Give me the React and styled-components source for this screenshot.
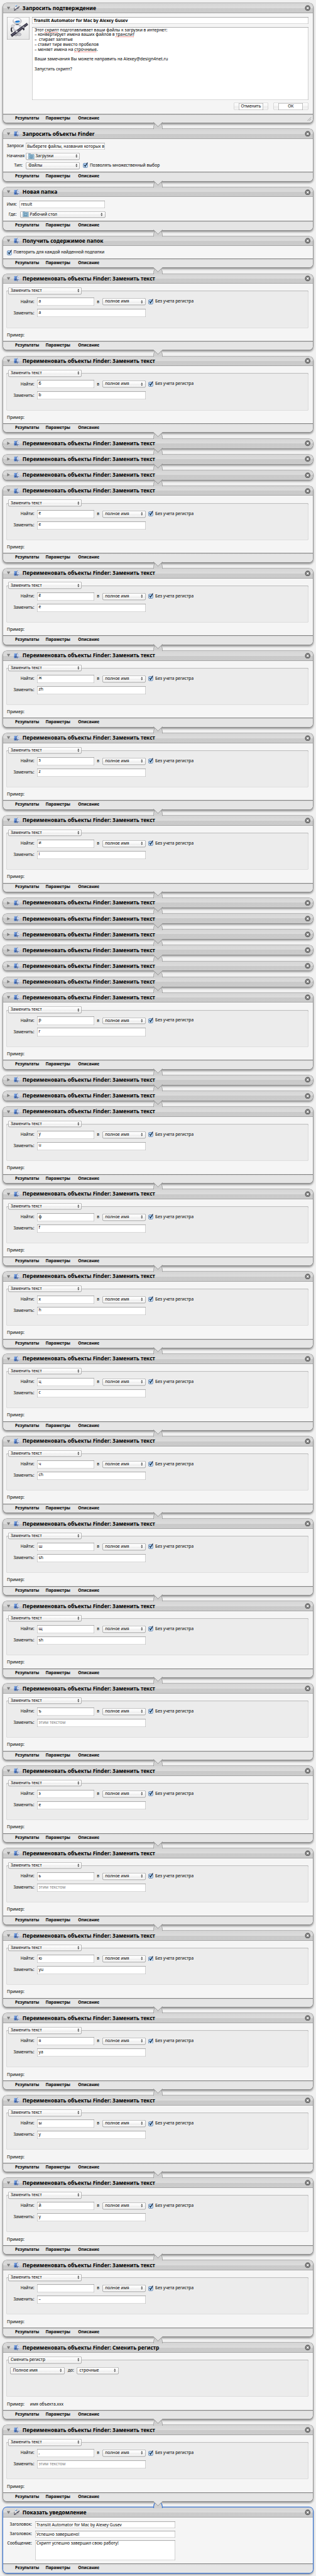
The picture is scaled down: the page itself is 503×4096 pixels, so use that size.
import React from 'react';
import styled, { createGlobalStyle, css } from 'styled-components';

// One design unit on screen; every dimension below is given in design units.
const UNIT = 4096 / 6846;
const u = (n) => `${+(n * UNIT).toFixed(3)}px`;

const GlobalStyle = createGlobalStyle`
  html, body { margin: 0; padding: 0; background: #f1f1f1; }
  body { overflow: hidden; }
`;

const Workflow = styled.main`
  width: ${u(841)};
  height: ${u(6846)};
  box-sizing: border-box;
  padding: ${u(9)} ${u(9)} 0;
  overflow: hidden;
  display: flex;
  flex-direction: column;
  background: #f1f1f1;
  color: #000;
  font-family: "Noto Sans", "Open Sans", sans-serif;
  font-size: ${u(11.15)};
  line-height: ${u(14)};
  white-space: pre;
`;

/* ---------- action card ---------- */

const Card = styled.section`
  flex: none;
  width: ${u(823)};
  height: ${(p) => u(p.$height - 2)};
  display: flex;
  flex-direction: column;
  border-radius: ${u(10)};
  background: #f5f5f5;
  box-shadow: ${(p) =>
    p.$selected
      ? `0 0 0 ${u(2)} #3c76d2, 0 ${u(3)} ${u(5)} ${u(1)} rgba(0, 0, 0, 0.35)`
      : `0 0 0 ${u(1)} #828282, 0 ${u(3)} ${u(5)} ${u(1)} rgba(0, 0, 0, 0.38)`};
`;

const Header = styled.header`
  flex: none;
  height: ${u(26)};
  box-sizing: border-box;
  display: flex;
  align-items: center;
  padding: 0 ${u(5)} ${u(1)} ${u(7)};
  border-radius: ${(p) => (p.$open ? `${u(10)} ${u(10)} 0 0` : u(10))};
  background: linear-gradient(#d5d5d5, #dcdcdc 48%, #cacaca 50%, #cbcbcb);
  ${(p) =>
    p.$open
      ? css`box-shadow: inset 0 -${u(1)} 0 #808080;`
      : css`height: ${u(25)}; padding-bottom: 0;`}
`;

const Title = styled.h2`
  flex: 1;
  margin: 0 0 0 ${u(7)};
  padding-top: ${u(1)};
  font-size: ${u(14.17)};
  line-height: ${u(18)};
  font-weight: 700;
`;

const HeaderGlyph = styled.svg`
  flex: none;
  display: block;
  width: ${(p) => u(p.$w)};
  height: ${(p) => u(p.$h)};
  margin-left: ${(p) => u(p.$ml || 0)};
`;

const Body = styled.div`
  flex: 1;
  min-height: 0;
  box-sizing: border-box;
  padding: ${(p) => u(p.$top)} ${u(11)} 0 ${u(9)};
`;

const Footer = styled.footer`
  flex: none;
  position: relative;
  height: ${u(24)};
  display: flex;
  align-items: center;
  padding-left: ${u(31)};
  font-size: ${u(11.05)};
  font-weight: 700;
  border-radius: 0 0 ${u(10)} ${u(10)};
  background: linear-gradient(#808080 ${u(1)}, #d2d2d2 ${u(1)}, #e5e5e5 ${u(5)});
`;

const FooterTab = styled.span`
  width: ${(p) => u(p.$width)};
`;

const Grip = styled.svg`
  position: absolute;
  right: ${u(3)};
  bottom: ${u(4)};
  width: ${u(11)};
  height: ${u(11)};
`;

const Link = styled.svg`
  flex: none;
  align-self: center;
  position: relative;
  z-index: 1;
  display: block;
  width: ${u(25)};
  height: ${u(19)};
  margin: ${u(-1)} 0;
`;

/* ---------- controls ---------- */

const Field = styled.div`
  flex: none;
  box-sizing: border-box;
  width: ${(p) => u(p.$width)};
  height: ${(p) => u(p.$height || 19)};
  padding: ${u(3)} ${u(2)} 0 ${u(4)};
  overflow: hidden;
  background: #fff;
  color: ${(p) => (p.$muted ? '#808080' : '#000')};
  font-weight: ${(p) => (p.$bold ? 700 : 400)};
  font-size: ${(p) => (p.$bold ? u(11.5) : 'inherit')};
  box-shadow: inset 0 ${u(1)} 0 #8c8c8c, inset 0 0 0 ${u(1)} #b4b4b4, inset 0 ${u(2)} ${u(1)} #ececec;
`;

const PopUpBox = styled.div`
  flex: none;
  box-sizing: border-box;
  width: ${(p) => u(p.$width)};
  height: ${u(18)};
  display: flex;
  align-items: center;
  justify-content: space-between;
  padding: 0 ${u(7)} ${u(0.5)} ${u(7.5)};
  border-radius: ${u(4)};
  background: linear-gradient(#fff, #f8f8f8 48%, #ededed 55%, #fafafa);
  box-shadow: inset 0 0 0 ${u(1)} #8e8e8e, 0 ${u(1)} ${u(1)} rgba(0, 0, 0, 0.22);
`;

const PopUpValue = styled.span`
  display: flex;
  align-items: center;
  gap: ${u(3)};
`;

const Arrows = styled.svg`
  width: ${u(6)};
  height: ${u(10)};
`;

const Folder = styled.svg`
  width: ${u(16)};
  height: ${u(15)};
`;

const CheckRow = styled.label`
  display: flex;
  align-items: center;
  gap: ${u(4)};
  margin-top: ${(p) => u(p.$top || 0)};
  margin-left: ${(p) => u(p.$left || 0)};
`;

const CheckGlyph = styled.svg`
  flex: none;
  width: ${u(14)};
  height: ${u(15)};
`;

const Row = styled.div`
  display: flex;
  align-items: ${(p) => p.$align || 'center'};
  height: ${(p) => u(p.$height)};
  margin-top: ${(p) => u(p.$top || 0)};
`;

const Label = styled.span`
  flex: none;
  box-sizing: border-box;
  width: ${(p) => u(p.$width)};
  padding-right: ${(p) => u(p.$gap ?? 8)};
  padding-top: ${(p) => u(p.$drop || 0)};
  text-align: ${(p) => (p.$start ? 'left' : 'right')};
`;

const Group = styled.fieldset`
  box-sizing: border-box;
  width: ${u(805)};
  height: ${u(99)};
  min-width: 0;
  margin: 0 0 0 ${u(-2)};
  padding: ${u(1)} ${u(1)};
  border: 0;
  border-radius: ${u(4)};
  background: #ececec;
  box-shadow: inset 0 ${u(1)} 0 #a6a6a6, inset 0 0 0 ${u(1)} #d0d0d0, inset 0 ${u(2)} ${u(1)} #dcdcdc;
`;

const ModePicker = styled.div`
  margin: ${u(-10)} 0 0 ${u(4)};
`;

const Sample = styled.div`
  display: flex;
  margin-top: ${u(12)};
  padding-left: ${u(0.5)};
`;

const SampleLabel = styled.span`
  width: ${u(61.5)};
`;

const Compose = styled.div`
  display: flex;
  gap: ${u(8)};
`;

const IconWell = styled.div`
  flex: none;
  width: ${u(60)};
  height: ${u(60)};
  background: linear-gradient(#fafafa, #e6e6e6);
  box-shadow: inset 0 0 0 ${u(1)} #9e9e9e;
`;

const WellArt = styled.svg`
  display: block;
  width: 100%;
  height: 100%;
`;

const ComposeMain = styled.div`
  width: ${u(734)};
`;

const Message = styled.div`
  box-sizing: border-box;
  height: ${u(193)};
  margin-top: ${u(8)};
  padding: ${u(1)} ${u(6)};
  line-height: ${u(13)};
  font-size: ${u(11.33)};
  background: #fff;
  box-shadow: inset 0 ${u(1)} 0 #8c8c8c, inset 0 0 0 ${u(1)} #b4b4b4;
`;

const Typo = styled.span`
  text-decoration: underline dotted #f0483e ${u(1.6)};
  text-underline-offset: ${u(1.4)};
  text-decoration-skip-ink: none;
`;

const Buttons = styled.div`
  display: flex;
  justify-content: flex-end;
  gap: ${u(13)};
  margin-top: ${u(8)};
`;

const Button = styled.div`
  box-sizing: border-box;
  width: ${u(93)};
  height: ${u(20)};
  display: flex;
  justify-content: center;
  border-radius: ${u(4)};
  background: linear-gradient(#fff, #f4f4f4 50%, #ececec 55%, #f8f8f8);
  box-shadow: inset 0 0 0 ${u(1)} #c4c4c4;
`;

const ButtonText = styled.div`
  box-sizing: border-box;
  width: ${u(66)};
  height: ${u(19)};
  margin-top: ${u(0.5)};
  padding-top: ${u(2.5)};
  text-align: center;
  background: #fff;
  box-shadow: inset 0 0 0 ${u(1)} #9a9a9a;
`;

/* ---------- drawings ---------- */

const Disclosure = ({ open }) => (
  <HeaderGlyph $w={12} $h={10} viewBox="0 0 12 10">
    <path d={open ? 'M1.4 1.2H10.6L6 9Z' : 'M2.2 0.6V9.4L10 5Z'} fill="#7d7d7d" />
  </HeaderGlyph>
);

const FinderIcon = () => (
  <HeaderGlyph $w={16} $h={16} $ml={9} viewBox="0 0 16 16">
    <path d="M1 1.6H8.6L7.4 14H1Z" fill="#6f9be0" />
    <path d="M1 8H8L7.4 14H1Z" fill="#446fbe" />
    <path d="M8.6 1.6H15V14H7.8L8.2 9.4H6.6Z" fill="#d3ddf1" />
    <path d="M8 10H15V14H7.8Z" fill="#a9bce0" />
    <path d="M10.6 0.2C7.6 3.6 6.9 6.6 6.8 9.2H8.8C8.5 11.6 8.7 13.8 9.6 15.8" fill="none" stroke="#2b3550" strokeWidth="0.8" />
    <path d="M3 10.4C6 12.8 10.4 12.6 13 10.2M4.6 4.6V6.4M11.6 4.6V6.4" fill="none" stroke="#26314d" strokeWidth="0.8" />
  </HeaderGlyph>
);

const RobotArt = () => (
  <g>
    <ellipse cx="24" cy="47" rx="5" ry="3.4" fill="#b4b4ba" stroke="#85858c" strokeWidth="0.8" />
    <ellipse cx="33" cy="46.500" rx="5" ry="3.800" fill="#c4c4ca" stroke="#85858c" strokeWidth="0.8" />
    <path d="M17 25C11 28 10 35 14 40" fill="none" stroke="#3c3c45" strokeWidth="3.600" />
    <path d="M17 24C17 19 38 19 38.500 25C39 34 36 42 28 43.500C20 43 17 34 17 24Z" fill="#cfcfd5" stroke="#8d8d95" strokeWidth="0.8" />
    <ellipse cx="15.500" cy="24.500" rx="4" ry="4" fill="#dadade" stroke="#96969d" strokeWidth="0.7" />
    <ellipse cx="26" cy="27" rx="7" ry="6.500" fill="#f2f2f5" />
    <rect x="24" y="17.500" width="7" height="3.500" fill="#3a3a42" />
    <ellipse cx="27.500" cy="11" rx="11.500" ry="8" fill="#d6d6db" stroke="#92929a" strokeWidth="0.9" />
    <ellipse cx="26.500" cy="8" rx="8.500" ry="4.400" fill="#fcfcfd" />
    <path d="M21.500 13.500C23 10 31.500 8.500 35 11C34 15.500 25 16.500 21.500 13.500Z" fill="#2f9df0" />
    <path d="M21.500 13.500C23 10 31.500 8.500 35 11C30 11.500 26 12 21.500 13.500Z" fill="#1b4fa3" />
    <path d="M40 29L44 36L47 34L45.500 27Z" fill="#2d2c38" />
    <path d="M9.500 47L53 15.500L56.500 21L13.500 53Z" fill="#33313f" />
    <path d="M12 48L54 17.500L54.800 18.900L13 49.500Z" fill="#77748e" />
    <circle cx="26" cy="38.500" r="3" fill="#c9c9cf" />
    <circle cx="44" cy="27" r="2.400" fill="#a9a9b2" />
  </g>
);

const RobotIcon = () => (
  <HeaderGlyph $w={16} $h={18} $ml={9} viewBox="9 1 49 54">
    <RobotArt />
  </HeaderGlyph>
);

const CloseIcon = () => (
  <HeaderGlyph $w={16} $h={16} viewBox="0 0 16 16">
    <circle cx="8" cy="8" r="7.4" fill="#6f6f6f" />
    <path d="M5.300 5.300L10.700 10.700M10.700 5.300L5.300 10.700" stroke="#fff" strokeWidth="2" />
  </HeaderGlyph>
);

const CheckIcon = () => (
  <CheckGlyph viewBox="0 0 14 15">
    <rect x="0.800" y="2.800" width="11.400" height="11.400" rx="2.400" fill="#a9d0f5" stroke="#4a6794" strokeWidth="1.100" />
    <path d="M2 8.400H11V12.500H2Z" fill="#cdeafd" />
    <path d="M3.400 7.400L6 11L12.400 0.800" fill="none" stroke="#0c1d38" strokeWidth="2" />
  </CheckGlyph>
);

const FolderIcon = ({ kind }) => (
  <Folder viewBox="0 0 16 15">
    <path d="M0.500 2.500V1H6L7 2.500H15.500V14.500H0.500Z" fill="#86aec8" stroke="#5d87a3" strokeWidth="0.800" />
    <path d="M0.900 4H15.100V14H0.900Z" fill="#98bed4" />
    {kind === 'downloads' ? (
      <g fill="none" stroke="#4f7f9e" strokeWidth="1.100">
        <circle cx="8" cy="8.800" r="3.900" />
        <path d="M8 6.500V10.500M6.200 9L8 11L9.800 9" />
      </g>
    ) : (
      <path d="M4 6H12V12H4ZM4.500 10.600H11.500" fill="none" stroke="#4f7f9e" strokeWidth="1.100" />
    )}
  </Folder>
);

const Connector = ({ from, selected }) => (
  <Link viewBox="0 0 25 19">
    <path d="M1 18.600V14C1 10 2.500 7 5 5H20C22.500 7 24 10 24 14V18.600Z" fill="#d0d0d0" />
    <path d="M5 5H20L12.500 13Z" fill="#a8a8a8" />
    <path
      d={selected ? 'M0 17.500H1V14C1 10 2.500 7 5 4.500M20 4.500C22.500 7 24 10 24 14V17.500H25' : 'M0 18.400H0.700V14C0.700 10 2.500 7 5 5M20 5C22.500 7 24.300 10 24.300 14V18.400H25'}
      fill="none"
      stroke={selected ? '#3c76d2' : '#858585'}
      strokeWidth={selected ? 2 : 1}
    />
    <path d="M0.500 0H24.500V1L12.500 12L0.500 1Z" fill={from} />
    <path d="M0 1L1 1L12.500 12L24 1L25 1" fill="none" stroke="#828282" strokeWidth="1" />
  </Link>
);

/* ---------- composed parts ---------- */

const PopUp = ({ width, folder, children }) => (
  <PopUpBox $width={width}>
    <PopUpValue>
      {folder && <FolderIcon kind={folder} />}
      {children}
    </PopUpValue>
    <Arrows viewBox="0 0 6 10">
      <path d="M3 0.400L5.400 4H0.600ZM3 9.600L5.400 6H0.600Z" fill="#404040" />
    </Arrows>
  </PopUpBox>
);

const Check = ({ children, ...rest }) => (
  <CheckRow {...rest}>
    <CheckIcon />
    <span>{children}</span>
  </CheckRow>
);

const FooterTabs = ({ resizable }) => (
  <Footer>
    <FooterTab $width={81}>Результаты</FooterTab>
    <FooterTab $width={86.5}>Параметры</FooterTab>
    <FooterTab $width={70}>Описание</FooterTab>
    {resizable && (
      <Grip viewBox="0 0 11 11">
        <path d="M0.500 10.500L10.500 0.500M5 10.500L10.500 5" stroke="#777" strokeWidth="1" />
      </Grip>
    )}
  </Footer>
);

const Action = ({ title, height, robot, selected, resizable, top = 10, children }) => (
  <Card $height={height} $selected={selected}>
    <Header $open={!!children}>
      <Disclosure open={!!children} />
      {robot ? <RobotIcon /> : <FinderIcon />}
      <Title>{title}</Title>
      <CloseIcon />
    </Header>
    {children && <Body $top={top}>{children}</Body>}
    {children && <FooterTabs resizable={resizable} />}
  </Card>
);

const RenameGroup = ({ mode, sample, children }) => (
  <>
    <Group>
      <ModePicker>
        <PopUp width={197}>{mode}</PopUp>
      </ModePicker>
      {children}
    </Group>
    <Sample>
      <SampleLabel>Пример:</SampleLabel>
      {sample}
    </Sample>
  </>
);

const ReplaceForm = ({ find, replace }) => (
  <RenameGroup mode="Заменить текст">
    <Row $height={22} $top={9}>
      <Label $width={82}>Найти:</Label>
      <Field $width={151} $height={22}>{find}</Field>
      <Label $width={22}>в</Label>
      <PopUp width={115}>полное имя</PopUp>
      <Check $left={8} $top={-1.5}>Без учета регистра</Check>
    </Row>
    <Row $height={22} $top={8}>
      <Label $width={82}>Заменить:</Label>
      <Field $width={288} $height={22} $muted={replace === null}>
        {replace ?? 'этим текстом'}
      </Field>
    </Row>
  </RenameGroup>
);

const MESSAGE = (
  <>
    Этот <Typo>скрипт</Typo> подготавливает ваши файлы к загрузки в интернет:{'\n'}
    – конвертирует имена ваших файлов в <Typo>транслит</Typo>{'\n'}
    –  стирает запятые{'\n'}
    – ставит тире вместо пробелов{'\n'}
    – меняет имена на <Typo>строчниые</Typo>.{'\n\n'}
    Ваши замечания Вы можете направить на Alexey@design4net.ru{'\n\n'}
    Запустить скрипт?
  </>
);

const pair = (find, replace) => ({ find, replace });
const COLLAPSED = {};

const REPLACEMENTS = [
  pair('а', 'a'), pair('б', 'b'),
  COLLAPSED, COLLAPSED, COLLAPSED,
  pair('е', 'e'), pair('ё', 'e'), pair('ж', 'zh'), pair('з', 'z'), pair('и', 'i'),
  COLLAPSED, COLLAPSED, COLLAPSED, COLLAPSED, COLLAPSED, COLLAPSED,
  pair('р', 'r'),
  COLLAPSED, COLLAPSED,
  pair('у', 'u'), pair('ф', 'f'), pair('х', 'h'), pair('ц', 'c'), pair('ч', 'ch'),
  pair('ш', 'sh'), pair('щ', 'sh'), pair('ъ', null), pair('э', 'e'), pair('ь', null),
  pair('ю', 'yu'), pair('я', 'ya'), pair('ы', 'y'), pair('й', 'y'), pair(' ', '–'),
];

const REPLACE_TITLE = 'Переименовать объекты Finder: Заменить текст';

const ReplaceAction = ({ find, replace }) =>
  find === undefined ? (
    <Action title={REPLACE_TITLE} height={27} />
  ) : (
    <Action title={REPLACE_TITLE} height={204} top={19}>
      <ReplaceForm find={find} replace={replace} />
    </Action>
  );

export default function App() {
  return (
    <Workflow>
      <GlobalStyle />

      <Action title="Запросить подтверждение" height={319} top={10} robot resizable>
        <Compose>
          <IconWell>
            <WellArt viewBox="0 0 60 60"><RobotArt /></WellArt>
          </IconWell>
          <ComposeMain>
            <Field $width={734} $height={19} $bold>Translit Automator for Mac by Alexey Gusev</Field>
            <Message>{MESSAGE}</Message>
            <Buttons>
              <Button><ButtonText>Отменить</ButtonText></Button>
              <Button><ButtonText>ОК</ButtonText></Button>
            </Buttons>
          </ComposeMain>
        </Compose>
      </Action>
      <Connector from="#e5e5e5" />

      <Action title="Запросить объекты Finder" height={140}>
        <Row $height={19}>
          <Label $width={50} $gap={5} $start>Запроси</Label>
          <Field $width={211}>Выберете файлы, названия которых в</Field>
        </Row>
        <Row $height={18} $top={8}>
          <Label $width={50} $gap={5} $start>Начиная</Label>
          <PopUp width={145} folder="downloads">Загрузки</PopUp>
        </Row>
        <Row $height={18} $top={7}>
          <Label $width={50}>Тип:</Label>
          <PopUp width={145}>Файлы</PopUp>
          <Check $left={8} $top={-1}>Позволять множественный выбор</Check>
        </Row>
      </Action>
      <Connector from="#e5e5e5" />

      <Action title="Новая папка" height={115}>
        <Row $height={19}>
          <Label $width={34}>Имя:</Label>
          <Field $width={227}>result</Field>
        </Row>
        <Row $height={18} $top={8}>
          <Label $width={35} $gap={9}>Где:</Label>
          <PopUp width={227} folder="desktop">Рабочий стол</PopUp>
        </Row>
      </Action>
      <Connector from="#e5e5e5" />

      <Action title="Получить содержимое папок" height={85} top={9}>
        <Check>Повторить для каждой найденной подпапки</Check>
      </Action>
      <Connector from="#e5e5e5" />

      {REPLACEMENTS.map((item, i) => (
        <React.Fragment key={i}>
          <ReplaceAction {...item} />
          <Connector from={item.find === undefined ? '#cbcbcb' : '#e5e5e5'} />
        </React.Fragment>
      ))}

      <Action title="Переименовать объекты Finder: Сменить регистр" height={204} top={19}>
        <RenameGroup mode="Сменить регистр" sample="имя объекта.xxx">
          <Row $height={18} $top={11}>
            <Label $width={10} />
            <PopUp width={145}>Полное имя</PopUp>
            <Label $width={32} $gap={7}>до:</Label>
            <PopUp width={112}>строчные</PopUp>
          </Row>
        </RenameGroup>
      </Action>
      <Connector from="#e5e5e5" />

      <Action title={REPLACE_TITLE} height={204} top={19}>
        <ReplaceForm find="," replace={null} />
      </Action>
      <Connector from="#e5e5e5" selected />

      <Action title="Показать уведомление" height={175} robot selected>
        <Row $height={19}>
          <Label $width={75}>Заголовок:</Label>
          <Field $width={373}>Translit Automator for Mac by Alexey Gusev</Field>
        </Row>
        <Row $height={19} $top={6}>
          <Label $width={75}>Заголовок:</Label>
          <Field $width={373}>Успешно завершено!</Field>
        </Row>
        <Row $height={54} $top={6} $align="flex-start">
          <Label $width={75} $drop={2}>Сообщение:</Label>
          <Field $width={373} $height={54}>Скрипт успешно завершил свою работу!</Field>
        </Row>
      </Action>
    </Workflow>
  );
}
